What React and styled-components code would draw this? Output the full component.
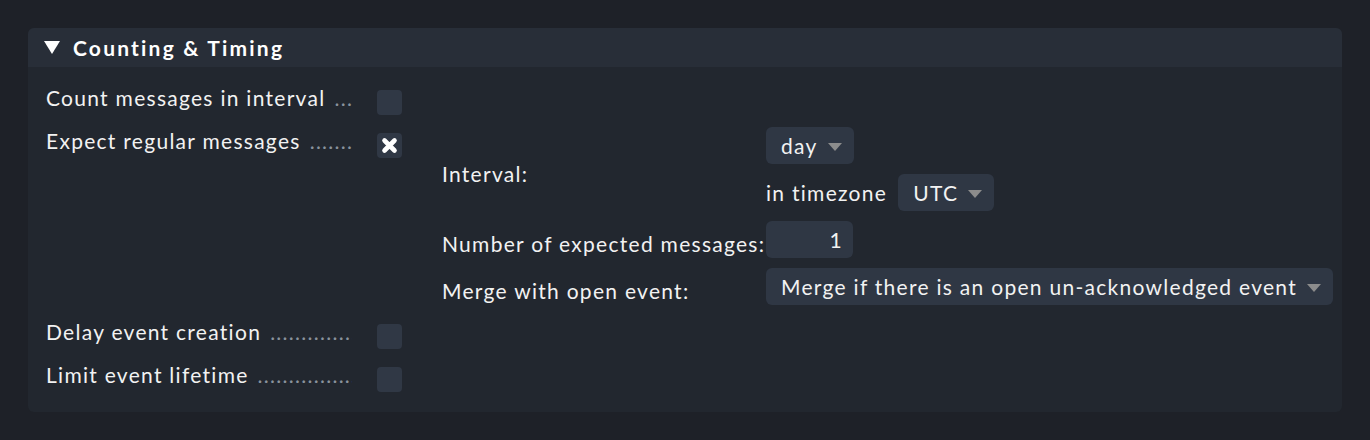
import React from 'react'
import styled, { createGlobalStyle } from 'styled-components'

const GlobalStyle = createGlobalStyle`
  html, body {
    margin: 0;
    padding: 0;
    background: #1e2128;
  }
  body {
    font-family: Lato, "Open Sans", sans-serif;
    color: #f2f2f2;
  }
`

const Page = styled.div`
  padding: 28px;
`

const Panel = styled.section`
  width: 1314px;
  background: #22272f;
  border-radius: 6px;
  overflow: hidden;
`

const PanelHeader = styled.div`
  display: flex;
  align-items: center;
  gap: 13px;
  height: 39px;
  padding-left: 16px;
  background: #282e38;
  font-size: 21px;
  font-weight: bold;
  letter-spacing: 2.2px;
  color: #ffffff;
`

const PanelBody = styled.div`
  display: grid;
  grid-template-columns: 306px 1fr;
  column-gap: 25px;
  row-gap: 18px;
  padding: 23px 18px 20px 18px;
`

const Legend = styled.div`
  display: flex;
  align-items: baseline;
  height: 24px;
  margin-top: -4px;
  font-size: 21px;
  line-height: 24px;
  letter-spacing: 1.28px;
  overflow: hidden;
  white-space: nowrap;
`

const Dots = styled.span`
  flex: 1;
  overflow: hidden;
  margin-left: 9px;
  color: #8a929c;
`

const Value = styled.div`
  display: flex;
  align-items: flex-start;
  gap: 40px;
`

const Checkbox = styled.div`
  flex: none;
  width: 25px;
  height: 25px;
  border-radius: 4px;
  background: #303845;
  display: flex;
  align-items: center;
  justify-content: center;
`

const SubTable = styled.div`
  display: grid;
  grid-template-columns: 324px auto;
  row-gap: 10px;
  margin-top: -6px;
  padding-bottom: 1px;
`

const SubLabel = styled.div`
  align-self: center;
  padding-top: 8px;
  font-size: 21px;
  letter-spacing: 1.28px;
  white-space: nowrap;
`

const SubValue = styled.div`
  display: flex;
  flex-direction: column;
  align-items: flex-start;
  gap: 10px;
`

const Inline = styled.div`
  display: flex;
  align-items: center;
  gap: 11px;
  font-size: 21px;
  letter-spacing: 1.28px;
`

const Select = styled.div`
  display: flex;
  align-items: center;
  gap: 10px;
  box-sizing: border-box;
  height: 37px;
  padding: 0 12px 0 15px;
  border-radius: 6px;
  background: #2f3744;
  font-size: 21px;
  letter-spacing: 1.28px;
  white-space: nowrap;
`

const NumberBox = styled(Select)`
  justify-content: flex-end;
  width: 87px;
  padding-right: 10px;
`

const Arrow = () => (
  <svg width="14" height="8" viewBox="0 0 14 8" style={{ marginTop: 3 }}>
    <polygon points="0,0 14,0 7,8" fill="#8c8c8c" />
  </svg>
)

const Caret = () => (
  <svg width="16" height="13" viewBox="0 0 16 13">
    <polygon points="0,0 16,0 8,13" fill="#ffffff" />
  </svg>
)

const Cross = () => (
  <svg width="17" height="17" viewBox="0 0 17 17">
    <path d="M3.5 3.5 L13.5 13.5 M13.5 3.5 L3.5 13.5" stroke="#ffffff" strokeWidth="4.6" strokeLinecap="round" />
  </svg>
)

const DOTS = '..................................................'

function Row({ label, checked, children }) {
  return (
    <>
      <Legend>
        {label}
        <Dots>{DOTS}</Dots>
      </Legend>
      <Value>
        <Checkbox>{checked && <Cross />}</Checkbox>
        {children}
      </Value>
    </>
  )
}

export default function App() {
  return (
    <Page>
      <GlobalStyle />
      <Panel>
        <PanelHeader>
          <Caret />
          Counting &amp; Timing
        </PanelHeader>
        <PanelBody>
          <Row label="Count messages in interval" />
          <Row label="Expect regular messages" checked>
            <SubTable>
              <SubLabel>Interval:</SubLabel>
              <SubValue>
                <Select>day <Arrow /></Select>
                <Inline>
                  in timezone
                  <Select>UTC <Arrow /></Select>
                </Inline>
              </SubValue>
              <SubLabel>Number of expected messages:</SubLabel>
              <SubValue>
                <NumberBox>1</NumberBox>
              </SubValue>
              <SubLabel>Merge with open event:</SubLabel>
              <SubValue>
                <Select>Merge if there is an open un-acknowledged event <Arrow /></Select>
              </SubValue>
            </SubTable>
          </Row>
          <Row label="Delay event creation" />
          <Row label="Limit event lifetime" />
        </PanelBody>
      </Panel>
    </Page>
  )
}
